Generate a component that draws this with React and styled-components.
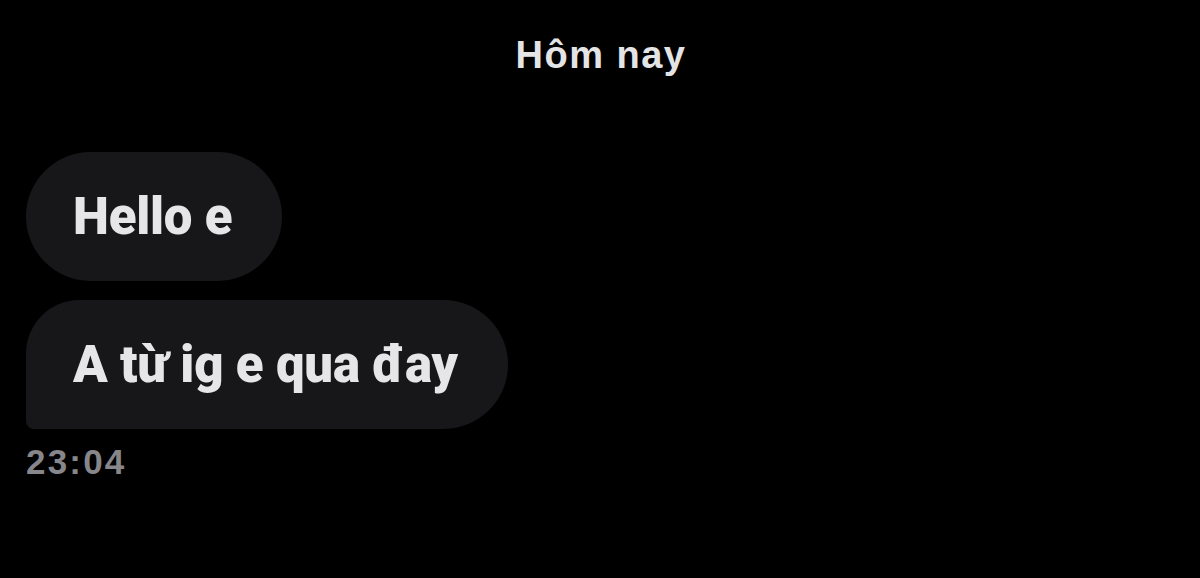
import React from "react";
import styled, { createGlobalStyle } from "styled-components";

const Global = createGlobalStyle`
  html, body { margin: 0; padding: 0; background: #000; }
  body { font-family: Roboto, "Liberation Sans", sans-serif; }
`;

const Screen = styled.div`
  width: 1200px;
  height: 578px;
  background: #000;
  display: flex;
  flex-direction: column;
  overflow: hidden;
`;

const DayLabel = styled.div`
  align-self: center;
  margin-top: 33px;
  color: #e4e4e6;
  font-family: "Liberation Sans", Arial, sans-serif;
  font-weight: 700;
  font-size: 38px;
  line-height: 44px;
  letter-spacing: 1.5px;
  padding-left: 2px;
`;

const Thread = styled.div`
  display: flex;
  flex-direction: column;
  align-items: flex-start;
  gap: 19px;
  padding-left: 26px;
  margin-top: 75px;
`;

const Bubble = styled.div`
  background: #17171a;
  color: #e6e6e8;
  height: 129px;
  box-sizing: border-box;
  display: flex;
  align-items: center;
  padding: 0 50px 0 47px;
  font-weight: 900;
  font-size: 51px;
  letter-spacing: -0.2px;
  border-radius: ${(p) => (p.$last ? "54px 65px 65px 8px" : "65px")};
`;

const Time = styled.div`
  margin-top: 13px;
  padding-left: 26px;
  color: #86868b;
  font-family: "Liberation Sans", Arial, sans-serif;
  font-weight: 700;
  font-size: 35px;
  line-height: 40px;
  letter-spacing: 2.2px;
`;

export default function App() {
  return (
    <Screen>
      <Global />
      <DayLabel>Hôm nay</DayLabel>
      <Thread>
        <Bubble>Hello e</Bubble>
        <Bubble $last>A từ ig e qua đay</Bubble>
      </Thread>
      <Time>23:04</Time>
    </Screen>
  );
}
